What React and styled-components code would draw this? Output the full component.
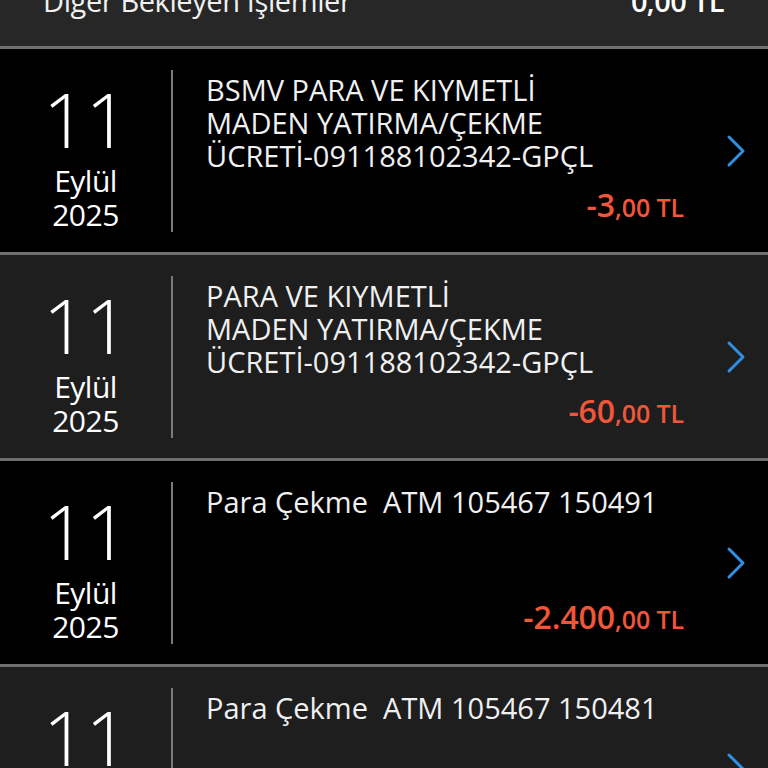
import React from "react";
import styled, { createGlobalStyle } from "styled-components";

const Global = createGlobalStyle`
  html, body { margin: 0; padding: 0; background: #000; }
  body { font-family: "Open Sans", "Noto Sans", sans-serif; color: #f2f2f2; }
  * { box-sizing: border-box; }
`;

const Page = styled.div`
  width: 768px;
  height: 768px;
  overflow: hidden;
  background: #000;
`;

const Header = styled.div`
  height: 46px;
  background: #272727;
  display: flex;
  align-items: flex-end;
  justify-content: space-between;
  padding: 0 44px 0 43px;
  overflow: hidden;
`;

const HeaderLabel = styled.div`
  font-size: 29px;
  line-height: 30px;
  margin-bottom: 30px;
  font-weight: 400;
  color: #f0f0f0;
  letter-spacing: -0.4px;
`;

const HeaderValue = styled.div`
  font-size: 29px;
  line-height: 30px;
  margin-bottom: 30px;
  font-weight: 600;
  color: #fff;
  letter-spacing: -0.6px;
`;

const Row = styled.div`
  height: 206px;
  display: flex;
  background: ${(p) => (p.$alt ? "#1e1e1e" : "#000")};
  border-top: 3px solid #6f6f6f;
`;

const DateCol = styled.div`
  width: 171px;
  flex: none;
  display: flex;
  flex-direction: column;
  align-items: center;
  padding-top: 30px;
  color: #fff;
`;

const Day = styled.div`
  font-size: 76px;
  font-weight: 300;
  line-height: 80px;
  letter-spacing: -1px;
`;

const DateLine = styled.div`
  font-size: 30px;
  font-weight: 400;
  line-height: 34px;
  letter-spacing: -0.5px;
  margin-top: ${(p) => (p.$first ? "5px" : "0")};
`;

const Divider = styled.div`
  width: 2px;
  flex: none;
  background: #7a7a7a;
  margin: 21px 0 20px;
`;

const Content = styled.div`
  flex: 1;
  display: flex;
  flex-direction: column;
  padding: 24px 0 28px 33px;
`;

const Desc = styled.div`
  font-size: 29px;
  line-height: 33px;
  color: #f0f0f0;
  letter-spacing: 0;
`;

const Amount = styled.div`
  margin-top: auto;
  align-self: flex-end;
  color: #f0563a;
  font-weight: 600;
  font-size: 32px;
  line-height: 34px;
  letter-spacing: -0.1px;
`;

const Small = styled.span`
  font-size: 25px;
`;

const ChevronCol = styled.div`
  width: 84px;
  flex: none;
  display: flex;
  align-items: center;
  justify-content: center;
  padding-left: 20px;
`;

const Chevron = () => (
  <svg width="22" height="34" viewBox="0 0 22 34" fill="none">
    <path d="M4 3 L18 17 L4 31" stroke="#2f8fe0" strokeWidth="3" strokeLinecap="round" strokeLinejoin="round" />
  </svg>
);

const rows = [
  { desc: ["BSMV PARA VE KIYMETLİ", "MADEN YATIRMA/ÇEKME", "ÜCRETİ-091188102342-GPÇL"], big: "-3", small: ",00 TL" },
  { desc: ["PARA VE KIYMETLİ", "MADEN YATIRMA/ÇEKME", "ÜCRETİ-091188102342-GPÇL"], big: "-60", small: ",00 TL", alt: true },
  { desc: ["Para Çekme\u00a0 ATM 105467 150491"], big: "-2.400", small: ",00 TL" },
  { desc: ["Para Çekme\u00a0 ATM 105467 150481"], big: "-2.400", small: ",00 TL", alt: true },
];

export default function App() {
  return (
    <Page>
      <Global />
      <Header>
        <HeaderLabel>Diğer Bekleyen İşlemler</HeaderLabel>
        <HeaderValue>0,00 TL</HeaderValue>
      </Header>
      {rows.map((r, i) => (
        <Row key={i} $alt={r.alt}>
          <DateCol>
            <Day>11</Day>
            <DateLine $first>Eylül</DateLine>
            <DateLine>2025</DateLine>
          </DateCol>
          <Divider />
          <Content>
            <Desc>
              {r.desc.map((l, j) => (
                <div key={j}>{l}</div>
              ))}
            </Desc>
            <Amount>
              {r.big}
              <Small>{r.small}</Small>
            </Amount>
          </Content>
          <ChevronCol>
            <Chevron />
          </ChevronCol>
        </Row>
      ))}
    </Page>
  );
}
